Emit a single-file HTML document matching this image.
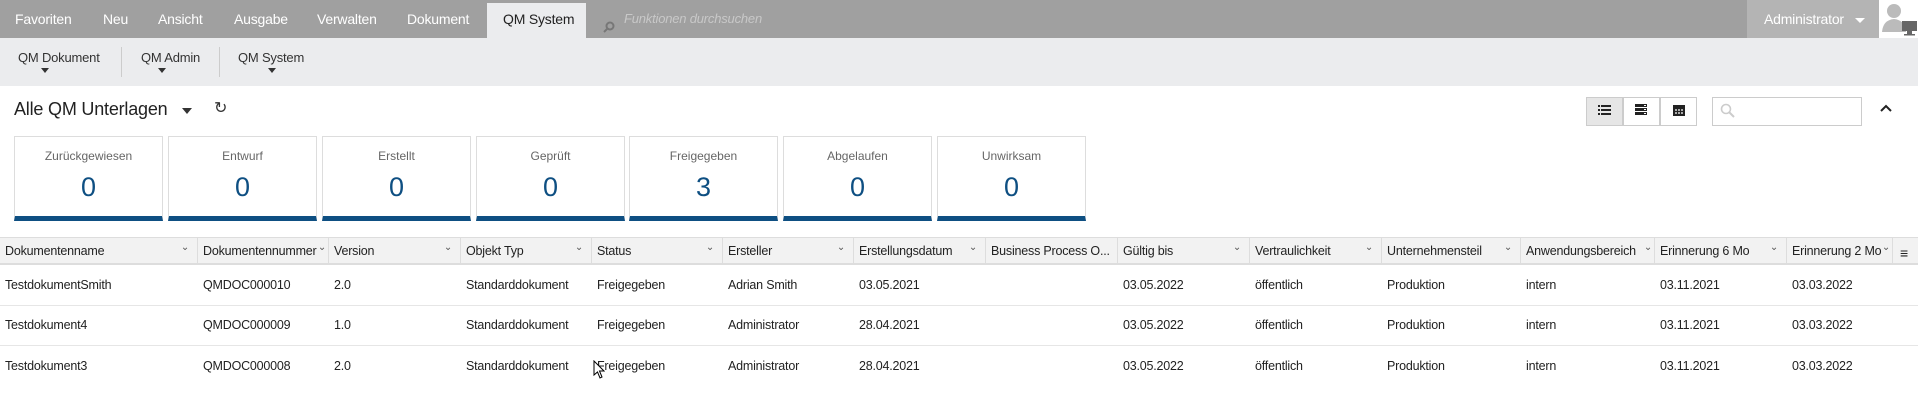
<!DOCTYPE html>
<html><head><meta charset="utf-8"><style>
*{margin:0;padding:0;box-sizing:border-box}
body{width:1918px;height:409px;overflow:hidden;background:#fff;font-family:"Liberation Sans",Arial,sans-serif;position:relative}
.a{position:absolute;white-space:nowrap}
.top{left:0;top:0;width:1918px;height:38px;background:#a0a0a0}
.tab{top:11px;font-family:"Liberation Sans Narrow","Liberation Sans",sans-serif;font-size:14px;color:#fff;letter-spacing:-0.2px}
.sub{left:0;top:38px;width:1918px;height:48px;background:#ebecee}
.si{top:50px;font-family:"Liberation Sans Narrow","Liberation Sans",sans-serif;font-size:13px;color:#333;letter-spacing:-0.2px}
.arr{width:0;height:0;border-left:4px solid transparent;border-right:4px solid transparent;border-top:5px solid #333}
.card{top:136px;width:149px;height:85px;border:1px solid #ddd;border-bottom:5px solid #0e4f82;text-align:center}
.card .l{margin-top:12px;font-size:12px;color:#666}
.card .n{margin-top:9px;font-size:27px;color:#0e4f82}
.hd{top:237px;left:0;width:1918px;height:28px;background:#f2f2f2;border-top:1px solid #ddd;border-bottom:2px solid #ddd}
.hc{top:237px;height:28px;border-right:1px solid #ddd;font-size:12.5px;color:#222;padding:7px 0 0 5px;letter-spacing:-0.2px}
.hc i{position:absolute;right:8px;top:5px;font-style:normal;font-size:10px;color:#555}
.c{font-size:12.5px;color:#222;letter-spacing:-0.2px}
.rl{left:0;width:1918px;height:1px;background:#e6e6e6}
.vb{top:97px;width:37px;height:29px;border:1px solid #ccc;background:#fff}
</style></head><body>
<div class="a top"></div>
<div class="a" style="left:487px;top:3px;width:99px;height:35px;background:#ebecee"></div>
<div class="a tab" style="left:15px">Favoriten</div>
<div class="a tab" style="left:103px">Neu</div>
<div class="a tab" style="left:158px">Ansicht</div>
<div class="a tab" style="left:234px">Ausgabe</div>
<div class="a tab" style="left:317px">Verwalten</div>
<div class="a tab" style="left:407px">Dokument</div>
<div class="a tab" style="left:503px;color:#222">QM System</div>
<svg class="a" style="left:603px;top:21px" width="12" height="12"><circle cx="7" cy="5" r="3.5" fill="none" stroke="#777" stroke-width="2"/><line x1="4.5" y1="7.5" x2="1" y2="11" stroke="#777" stroke-width="2"/></svg>
<div class="a tab" style="left:624px;color:#c8c8c8;font-style:italic;font-size:13px">Funktionen durchsuchen</div>
<div class="a" style="left:1747px;top:0;width:132px;height:38px;background:#b4b4b4"></div>
<div class="a tab" style="left:1764px;color:#fff">Administrator</div>
<div class="a" style="left:1855px;top:18px;width:0;height:0;border-left:5px solid transparent;border-right:5px solid transparent;border-top:5px solid #fff"></div>
<div class="a" style="left:1879px;top:0;width:39px;height:38px;background:#fff"></div>
<svg class="a" style="left:1880px;top:2px" width="38" height="34"><circle cx="14" cy="9" r="7" fill="#bbb"/><path d="M2 30 Q3 18 14 17 Q25 18 26 30 Z" fill="#bbb"/><rect x="22" y="19" width="15" height="10" fill="#666"/><rect x="27" y="29" width="5" height="3" fill="#666"/><rect x="24" y="32" width="11" height="1.5" fill="#666"/></svg>
<div class="a sub"></div>
<div class="a si" style="left:18px">QM Dokument</div><div class="a arr" style="left:41px;top:68px"></div>
<div class="a" style="left:121px;top:47px;width:1px;height:30px;background:#ccc"></div>
<div class="a si" style="left:141px">QM Admin</div><div class="a arr" style="left:158px;top:68px"></div>
<div class="a" style="left:219px;top:47px;width:1px;height:30px;background:#ccc"></div>
<div class="a si" style="left:238px">QM System</div><div class="a arr" style="left:268px;top:68px"></div>
<div class="a" style="left:14px;top:99px;font-size:18px;color:#222;letter-spacing:-0.2px">Alle QM Unterlagen</div>
<div class="a" style="left:182px;top:108px;width:0;height:0;border-left:5px solid transparent;border-right:5px solid transparent;border-top:6px solid #333"></div>
<div class="a" style="left:214px;top:98px;font-size:16px;color:#333">&#x21bb;</div>
<div class="a vb" style="left:1586px;background:#e6e6e6"></div>
<div class="a vb" style="left:1623px"></div>
<div class="a vb" style="left:1660px"></div>
<svg class="a" style="left:1598px;top:104px" width="14" height="14"><g fill="#222"><rect x="0" y="1" width="2" height="2"/><rect x="3" y="1" width="10" height="2"/><rect x="0" y="5" width="2" height="2"/><rect x="3" y="5" width="10" height="2"/><rect x="0" y="9" width="2" height="2"/><rect x="3" y="9" width="10" height="2"/></g></svg>
<svg class="a" style="left:1635px;top:104px" width="14" height="14"><g fill="#222"><rect x="0" y="0" width="12" height="3"/><rect x="0" y="4" width="12" height="3"/><rect x="0" y="8" width="12" height="3"/></g><g fill="#fff"><rect x="9" y="1" width="2" height="1"/><rect x="9" y="5" width="2" height="1"/><rect x="9" y="9" width="2" height="1"/></g></svg>
<svg class="a" style="left:1673px;top:103px" width="14" height="14"><rect x="0" y="2" width="12" height="11" fill="#222"/><g fill="#aaa"><rect x="2" y="6" width="2" height="2"/><rect x="5" y="6" width="2" height="2"/><rect x="8" y="6" width="2" height="2"/><rect x="2" y="9" width="2" height="2"/><rect x="5" y="9" width="2" height="2"/><rect x="8" y="9" width="2" height="2"/></g></svg>
<div class="a" style="left:1712px;top:97px;width:150px;height:29px;border:1px solid #ccc"></div>
<svg class="a" style="left:1720px;top:103px" width="16" height="16"><circle cx="6" cy="6" r="4.5" fill="none" stroke="#ccc" stroke-width="1.6"/><line x1="9.5" y1="9.5" x2="14" y2="14" stroke="#ccc" stroke-width="2"/></svg>
<svg class="a" style="left:1880px;top:104px" width="12" height="8"><path d="M1 7 L6 2 L11 7" fill="none" stroke="#222" stroke-width="2"/></svg>
<div class="a card" style="left:14px"><div class="l">Zurückgewiesen</div><div class="n">0</div></div>
<div class="a card" style="left:168px"><div class="l">Entwurf</div><div class="n">0</div></div>
<div class="a card" style="left:322px"><div class="l">Erstellt</div><div class="n">0</div></div>
<div class="a card" style="left:476px"><div class="l">Geprüft</div><div class="n">0</div></div>
<div class="a card" style="left:629px"><div class="l">Freigegeben</div><div class="n">3</div></div>
<div class="a card" style="left:783px"><div class="l">Abgelaufen</div><div class="n">0</div></div>
<div class="a card" style="left:937px"><div class="l">Unwirksam</div><div class="n">0</div></div>
<div class="a hd"></div>
<div class="a hc" style="left:0;width:198px">Dokumentenname<i>&#x2304;</i></div>
<div class="a hc" style="left:198px;width:131px">Dokumentennummer<i style="right:2px">&#x2304;</i></div>
<div class="a hc" style="left:329px;width:132px">Version<i>&#x2304;</i></div>
<div class="a hc" style="left:461px;width:131px">Objekt Typ<i>&#x2304;</i></div>
<div class="a hc" style="left:592px;width:131px">Status<i>&#x2304;</i></div>
<div class="a hc" style="left:723px;width:131px">Ersteller<i>&#x2304;</i></div>
<div class="a hc" style="left:854px;width:132px">Erstellungsdatum<i>&#x2304;</i></div>
<div class="a hc" style="left:986px;width:132px">Business Process O...</div>
<div class="a hc" style="left:1118px;width:132px">Gültig bis<i>&#x2304;</i></div>
<div class="a hc" style="left:1250px;width:132px">Vertraulichkeit<i>&#x2304;</i></div>
<div class="a hc" style="left:1382px;width:139px">Unternehmensteil<i>&#x2304;</i></div>
<div class="a hc" style="left:1521px;width:134px">Anwendungsbereich<i style="right:2px">&#x2304;</i></div>
<div class="a hc" style="left:1655px;width:132px">Erinnerung 6 Mo<i>&#x2304;</i></div>
<div class="a hc" style="left:1787px;width:106px">Erinnerung 2 Mo<i style="right:2px">&#x2304;</i></div>
<div class="a" style="left:1900px;top:245px;font-size:14px;font-weight:bold;color:#222">&#x2261;</div>
<div class="a rl" style="top:305px"></div>
<div class="a rl" style="top:345px"></div>
<div class="a c" style="top:278px;left:5px">TestdokumentSmith</div><div class="a c" style="top:278px;left:203px">QMDOC000010</div><div class="a c" style="top:278px;left:334px">2.0</div><div class="a c" style="top:278px;left:466px">Standarddokument</div><div class="a c" style="top:278px;left:597px">Freigegeben</div><div class="a c" style="top:278px;left:728px">Adrian Smith</div><div class="a c" style="top:278px;left:859px">03.05.2021</div><div class="a c" style="top:278px;left:1123px">03.05.2022</div><div class="a c" style="top:278px;left:1255px">öffentlich</div><div class="a c" style="top:278px;left:1387px">Produktion</div><div class="a c" style="top:278px;left:1526px">intern</div><div class="a c" style="top:278px;left:1660px">03.11.2021</div><div class="a c" style="top:278px;left:1792px">03.03.2022</div>
<div class="a c" style="top:318px;left:5px">Testdokument4</div><div class="a c" style="top:318px;left:203px">QMDOC000009</div><div class="a c" style="top:318px;left:334px">1.0</div><div class="a c" style="top:318px;left:466px">Standarddokument</div><div class="a c" style="top:318px;left:597px">Freigegeben</div><div class="a c" style="top:318px;left:728px">Administrator</div><div class="a c" style="top:318px;left:859px">28.04.2021</div><div class="a c" style="top:318px;left:1123px">03.05.2022</div><div class="a c" style="top:318px;left:1255px">öffentlich</div><div class="a c" style="top:318px;left:1387px">Produktion</div><div class="a c" style="top:318px;left:1526px">intern</div><div class="a c" style="top:318px;left:1660px">03.11.2021</div><div class="a c" style="top:318px;left:1792px">03.03.2022</div>
<div class="a c" style="top:359px;left:5px">Testdokument3</div><div class="a c" style="top:359px;left:203px">QMDOC000008</div><div class="a c" style="top:359px;left:334px">2.0</div><div class="a c" style="top:359px;left:466px">Standarddokument</div><div class="a c" style="top:359px;left:597px">Freigegeben</div><div class="a c" style="top:359px;left:728px">Administrator</div><div class="a c" style="top:359px;left:859px">28.04.2021</div><div class="a c" style="top:359px;left:1123px">03.05.2022</div><div class="a c" style="top:359px;left:1255px">öffentlich</div><div class="a c" style="top:359px;left:1387px">Produktion</div><div class="a c" style="top:359px;left:1526px">intern</div><div class="a c" style="top:359px;left:1660px">03.11.2021</div><div class="a c" style="top:359px;left:1792px">03.03.2022</div>
<svg class="a" style="left:593px;top:360px" width="12" height="20"><path d="M1 1 L1 15 L4.5 12 L7 18 L9 17 L6.5 11 L11 11 Z" fill="#fff" stroke="#000" stroke-width="1"/></svg>
</body></html>
